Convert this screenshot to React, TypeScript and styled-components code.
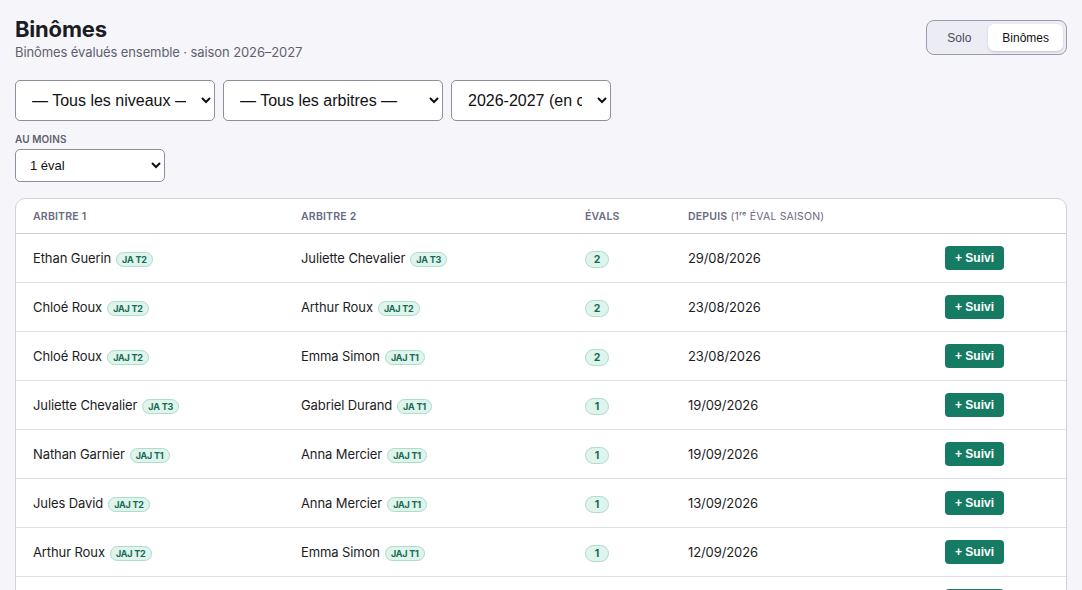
import styled, { createGlobalStyle } from 'styled-components';

const GlobalStyle = createGlobalStyle`
  html, body {
    margin: 0;
    padding: 0;
    background: #f6f6fa;
    font-family: Inter, "Noto Sans", sans-serif;
    color: #1c1c24;
  }
  * { box-sizing: border-box; }
`;

const Page = styled('div')`
  padding: 15px 15px 0 15px;
  height: 590px;
  overflow: hidden;
`;

const Header = styled('div')`
  display: flex;
  justify-content: space-between;
  align-items: flex-start;
`;

const Title = styled('h1')`
  margin: 0;
  font-size: 22px;
  font-weight: 700;
  letter-spacing: -0.2px;
  line-height: 28px;
`;

const Subtitle = styled('div')`
  font-size: 13px;
  color: #5f5f70;
  margin-top: 1px;
  letter-spacing: -0.1px;
`;

const Toggle = styled('div')`
  display: flex;
  margin-top: 5px;
  padding: 3px;
  border: 1px solid #9a9aae;
  border-radius: 8px;
  background: #ececf5;
`;

const ToggleButton = styled('button')<{ $active?: boolean }>`
  border: none;
  font-family: "Liberation Sans", Arial, sans-serif;
  font-size: 12px;
  height: 27px;
  padding: 0 ${(p) => (p.$active ? '14px' : '17px')};
  border-radius: 6px;
  color: ${(p) => (p.$active ? '#111' : '#4a4a5a')};
  background: ${(p) => (p.$active ? '#ffffff' : 'transparent')};
  box-shadow: ${(p) => (p.$active ? '0 1px 2px rgba(0,0,0,0.18)' : 'none')};
`;

const Filters = styled('div')`
  display: flex;
  gap: 8px;
  margin-top: 20px;
`;

const Select = styled('select')<{ $w: number; $small?: boolean }>`
  width: ${(p) => p.$w}px;
  height: ${(p) => (p.$small ? 33 : 41)}px;
  font-family: "Liberation Sans", Arial, sans-serif;
  font-size: ${(p) => (p.$small ? 13 : 16)}px;
  color: #111;
  background: #fff;
  border: 1px solid #8e8e9c;
  border-radius: 5px;
  padding: 0 ${(p) => (p.$small ? 8 : 12)}px 0 ${(p) => (p.$small ? 10 : 12)}px;
`;

const Label = styled('div')`
  margin-top: 12px;
  font-size: 10px;
  font-weight: 600;
  color: #5f5f70;
  text-transform: uppercase;
  letter-spacing: 0.1px;
  line-height: 13px;
`;

const FieldSelect = styled('div')`
  margin-top: 3px;
`;

const Card = styled('div')`
  margin-top: 16px;
  background: #fff;
  border: 1px solid #d2d2de;
  border-radius: 10px;
  overflow: hidden;
`;

const Row = styled('div')<{ $head?: boolean }>`
  display: grid;
  grid-template-columns: 268px 284px 103px 257px 1fr;
  align-items: center;
  height: ${(p) => (p.$head ? 35 : 49)}px;
  border-bottom: 1px solid ${(p) => (p.$head ? '#cfcfdc' : '#dedee8')};
`;

const Cell = styled('div')`
  padding-left: 17px;
  display: flex;
  align-items: center;
  font-size: 13px;
  letter-spacing: -0.1px;
`;

const HeadCell = styled(Cell)`
  font-size: 10.5px;
  font-weight: 600;
  color: #6a6a80;
  text-transform: uppercase;
  letter-spacing: 0.2px;
`;

const HeadLight = styled('span')`
  font-weight: 400;
  margin-left: 3px;
`;

const Level = styled('span')`
  display: inline-block;
  margin-left: 5px;
  margin-top: 2px;
  padding: 0 5px;
  height: 15px;
  line-height: 14px;
  font-size: 9px;
  font-weight: 700;
  color: #166a53;
  background: #def4ec;
  border: 1px solid #acdcca;
  border-radius: 8px;
  letter-spacing: -0.2px;
`;

const Count = styled('span')`
  display: inline-block;
  width: 24px;
  height: 17px;
  line-height: 15px;
  text-align: center;
  font-size: 10.5px;
  font-weight: 700;
  color: #166a53;
  background: #def4ec;
  border: 1px solid #acdcca;
  border-radius: 9px;
  margin-top: 2px;
`;

const SuiviButton = styled('button')`
  border: none;
  height: 24px;
  width: 59px;
  border-radius: 4px;
  background: #157b63;
  color: #fff;
  font-family: "Liberation Sans", Arial, sans-serif;
  font-size: 12px;
  font-weight: 700;
  padding: 0;
`;

type Pair = { a: string; la: string; b: string; lb: string; n: number; d: string };

const pairs: Pair[] = [
  { a: 'Ethan Guerin', la: 'JA T2', b: 'Juliette Chevalier', lb: 'JA T3', n: 2, d: '29/08/2026' },
  { a: 'Chloé Roux', la: 'JAJ T2', b: 'Arthur Roux', lb: 'JAJ T2', n: 2, d: '23/08/2026' },
  { a: 'Chloé Roux', la: 'JAJ T2', b: 'Emma Simon', lb: 'JAJ T1', n: 2, d: '23/08/2026' },
  { a: 'Juliette Chevalier', la: 'JA T3', b: 'Gabriel Durand', lb: 'JA T1', n: 1, d: '19/09/2026' },
  { a: 'Nathan Garnier', la: 'JAJ T1', b: 'Anna Mercier', lb: 'JAJ T1', n: 1, d: '19/09/2026' },
  { a: 'Jules David', la: 'JAJ T2', b: 'Anna Mercier', lb: 'JAJ T1', n: 1, d: '13/09/2026' },
  { a: 'Arthur Roux', la: 'JAJ T2', b: 'Emma Simon', lb: 'JAJ T1', n: 1, d: '12/09/2026' },
  { a: 'Léa Martin', la: 'JA T1', b: 'Hugo Bernard', lb: 'JA T2', n: 1, d: '06/09/2026' },
];

export default function App() {
  return (
    <Page>
      <GlobalStyle />
      <Header>
        <div>
          <Title>Binômes</Title>
          <Subtitle>Binômes évalués ensemble · saison 2026–2027</Subtitle>
        </div>
        <Toggle>
          <ToggleButton>Solo</ToggleButton>
          <ToggleButton $active>Binômes</ToggleButton>
        </Toggle>
      </Header>

      <Filters>
        <Select $w={200} defaultValue="n">
          <option value="n">— Tous les niveaux —</option>
        </Select>
        <Select $w={220} defaultValue="a">
          <option value="a">— Tous les arbitres —</option>
        </Select>
        <Select $w={160} defaultValue="s">
          <option value="s">2026-2027 (en cours)</option>
        </Select>
      </Filters>

      <Label>Au moins</Label>
      <FieldSelect>
        <Select $w={150} $small defaultValue="1">
          <option value="1">1 éval</option>
        </Select>
      </FieldSelect>

      <Card>
        <Row $head>
          <HeadCell>Arbitre 1</HeadCell>
          <HeadCell>Arbitre 2</HeadCell>
          <HeadCell>Évals</HeadCell>
          <HeadCell>
            Depuis<HeadLight>(1ʳᵉ éval saison)</HeadLight>
          </HeadCell>
          <HeadCell />
        </Row>
        {pairs.map((p, i) => (
          <Row key={i}>
            <Cell>
              {p.a}
              <Level>{p.la}</Level>
            </Cell>
            <Cell>
              {p.b}
              <Level>{p.lb}</Level>
            </Cell>
            <Cell>
              <Count>{p.n}</Count>
            </Cell>
            <Cell>{p.d}</Cell>
            <Cell>
              <SuiviButton>+ Suivi</SuiviButton>
            </Cell>
          </Row>
        ))}
      </Card>
    </Page>
  );
}
